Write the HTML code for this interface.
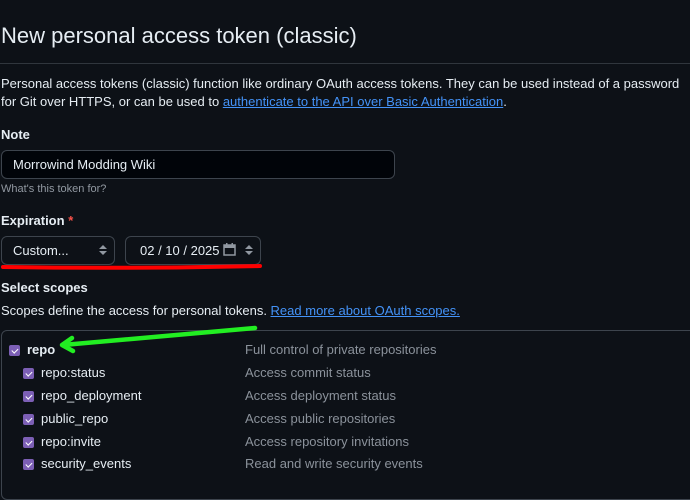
<!DOCTYPE html>
<html><head><style>
body{margin:0;width:690px;height:483px;overflow:hidden;background:#0d1117;color:#e6edf3;font-family:"Liberation Sans",sans-serif;position:relative}
.a{position:absolute;white-space:nowrap}
h1{position:absolute;left:1px;top:23px;margin:0;font-weight:400;font-size:22px;color:#e6edf3}
.hr{position:absolute;left:0;top:63px;width:690px;height:1px;background:#30363d}
.p{font-size:13px;color:#e6edf3}
a{color:#4493f8;text-decoration:underline}
.b{font-weight:700;font-size:13px}
.box{position:absolute;border:1px solid #3d444d;border-radius:6px;background:#010409;box-sizing:border-box}
.sel{background:#0d1117}
.cb{position:absolute;width:11px;height:11px;background:#7c5fb5;border-radius:2px}
.cb:after{content:"";position:absolute;left:3.5px;top:1.5px;width:2.5px;height:5px;border:solid #fff;border-width:0 1.5px 1.5px 0;transform:rotate(45deg)}
.lab{font-size:13px;color:#e6edf3}
.d{font-size:13px;color:#8b929b;left:245px}
.ar{position:absolute;width:0;height:0;border-left:4px solid transparent;border-right:4px solid transparent}
</style></head><body>
<h1>New personal access token (classic)</h1>
<div class="hr"></div>
<div class="a p" style="left:1px;top:76px">Personal access tokens (classic) function like ordinary OAuth access tokens. They can be used instead of a password</div>
<div class="a p" style="left:1px;top:94px">for Git over HTTPS, or can be used to <a>authenticate to the API over Basic Authentication</a>.</div>
<div class="a b" style="left:1px;top:127px">Note</div>
<div class="box" style="left:1px;top:150px;width:394px;height:29px"></div>
<div class="a p" style="left:13px;top:157px">Morrowind Modding Wiki</div>
<div class="a" style="left:1px;top:183px;font-size:11px;color:#9198a1">What's this token for?</div>
<div class="a b" style="left:1px;top:213px">Expiration <span style="color:#f85149">*</span></div>
<div class="box sel" style="left:1px;top:236px;width:114px;height:29px"></div>
<div class="a p" style="left:13px;top:243px">Custom...</div>
<div class="ar" style="left:99px;top:245px;border-bottom:4px solid #9198a1"></div>
<div class="ar" style="left:99px;top:251px;border-top:4px solid #9198a1"></div>
<div class="box sel" style="left:125px;top:236px;width:136px;height:29px"></div>
<div class="a p" style="left:140px;top:243px">02 / 10 / 2025</div>
<svg class="a" style="left:223px;top:243px" width="13" height="13" viewBox="0 0 13 13"><rect x="1" y="2" width="11" height="10" fill="none" stroke="#9198a1" stroke-width="1.5"/><rect x="1" y="2" width="11" height="3" fill="#9198a1"/><rect x="3" y="0" width="1.5" height="3" fill="#9198a1"/><rect x="8.5" y="0" width="1.5" height="3" fill="#9198a1"/></svg>
<div class="ar" style="left:245px;top:245px;border-bottom:4px solid #9198a1"></div>
<div class="ar" style="left:245px;top:251px;border-top:4px solid #9198a1"></div>
<svg class="a" style="left:0;top:262px" width="270" height="10"><path d="M3 5 Q130 7 260 4" stroke="#ff0000" stroke-width="4" stroke-linecap="round" fill="none"/></svg>
<div class="a b" style="left:1px;top:280px">Select scopes</div>
<div class="a p" style="left:1px;top:303px">Scopes define the access for personal tokens. <a>Read more about OAuth scopes.</a></div>
<div class="box" style="left:1px;top:330px;width:700px;height:170px;background:#0d1117"></div>
<div class="cb" style="left:9px;top:345px"></div><div class="a b" style="left:27px;top:342px">repo</div><div class="a d" style="top:342px">Full control of private repositories</div>
<div class="cb" style="left:23px;top:368px"></div><div class="a lab" style="left:41px;top:365px">repo:status</div><div class="a d" style="top:365px">Access commit status</div>
<div class="cb" style="left:23px;top:391px"></div><div class="a lab" style="left:41px;top:388px">repo_deployment</div><div class="a d" style="top:388px">Access deployment status</div>
<div class="cb" style="left:23px;top:414px"></div><div class="a lab" style="left:41px;top:411px">public_repo</div><div class="a d" style="top:411px">Access public repositories</div>
<div class="cb" style="left:23px;top:437px"></div><div class="a lab" style="left:41px;top:434px">repo:invite</div><div class="a d" style="top:434px">Access repository invitations</div>
<div class="cb" style="left:23px;top:459px"></div><div class="a lab" style="left:41px;top:456px">security_events</div><div class="a d" style="top:456px">Read and write security events</div>
<svg class="a" style="left:0;top:0" width="690" height="483"><path d="M255 328 L63 345 M72 338 L62 345 L73 351" stroke="#22ee22" stroke-width="4.5" stroke-linecap="round" stroke-linejoin="round" fill="none"/></svg>
</body></html>
